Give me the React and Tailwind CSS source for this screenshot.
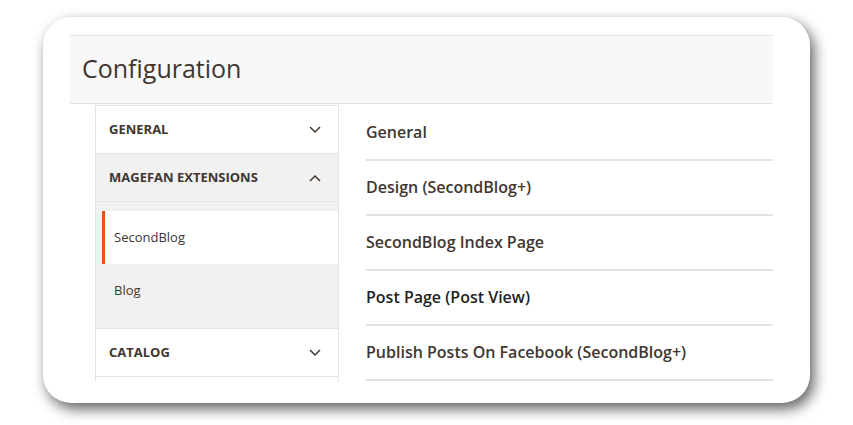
import React from "react";

const sections = [
  "General",
  "Design (SecondBlog+)",
  "SecondBlog Index Page",
  "Post Page (Post View)",
  "Publish Posts On Facebook (SecondBlog+)",
];

function Chevron({ up }) {
  return (
    <svg width="12" height="8" viewBox="0 0 12 8" className="mr-[5px]">
      <polyline
        points={up ? "1,7 6,2 11,7" : "1,1 6,6 11,1"}
        fill="none"
        stroke="#41362f"
        strokeWidth="1.5"
      />
    </svg>
  );
}

function NavHead({ label, open, gray }) {
  return (
    <div
      className={`flex h-[48px] items-center justify-between border-b border-[#e3e3e3] pl-[13px] pr-[12px] ${
        gray ? "bg-[#f1f1f1]" : "bg-white"
      }`}
    >
      <span className="text-[13px] font-bold uppercase text-[#41362f]">{label}</span>
      <Chevron up={open} />
    </div>
  );
}

export default function App() {
  return (
    <div
      className="h-[425px] w-[853px] overflow-hidden bg-white pl-[43px] pt-[17px]"
      style={{ fontFamily: '"Open Sans", "Liberation Sans", sans-serif' }}
    >
      <div className="h-[386px] w-[767px] rounded-[28px] bg-white pl-[27px] pr-[37px] pt-[18px] shadow-[4px_6px_14px_rgba(0,0,0,0.62)]">
        <div className="h-[347px] overflow-hidden">
          <div className="flex h-[69px] items-center border-y border-[#e3e3e3] bg-[#f8f8f8] pl-[12px]">
            <h1 className="pb-[2px] text-[25px] font-normal text-[#41362f]">Configuration</h1>
          </div>

          <div className="flex">
            <div className="ml-[25px] mt-px w-[244px] border-x border-t border-[#e3e3e3]">
              <NavHead label="General" />
              <NavHead label="Magefan Extensions" open gray />
              <div className="bg-[#f1f1f1] pb-[11px] pt-[9px]">
                <div className="ml-[6px] flex h-[53px] items-center border-l-[3px] border-[#eb5202] bg-white pl-[9px]">
                  <span className="text-[13px] text-[#41362f]">SecondBlog</span>
                </div>
                <div className="flex h-[53px] items-center pl-[18px]">
                  <span className="text-[13px] text-[#41362f]">Blog</span>
                </div>
              </div>
              <div className="border-t border-[#e3e3e3]">
                <NavHead label="Catalog" />
              </div>
              <div className="h-[20px] bg-white" />
            </div>

            <div className="ml-[27px] mt-[2px] w-[407px]">
              {sections.map((s) => (
                <div
                  key={s}
                  className="flex h-[55px] items-center border-b-2 border-[#e3e3e3] pb-[2px]"
                >
                  <span
                    className={`text-[16px] font-semibold ${
                      s.startsWith("Post Page") ? "text-[#1f1f1f]" : "text-[#41362f]"
                    }`}
                  >
                    {s}
                  </span>
                </div>
              ))}
            </div>
          </div>
        </div>
      </div>
    </div>
  );
}
